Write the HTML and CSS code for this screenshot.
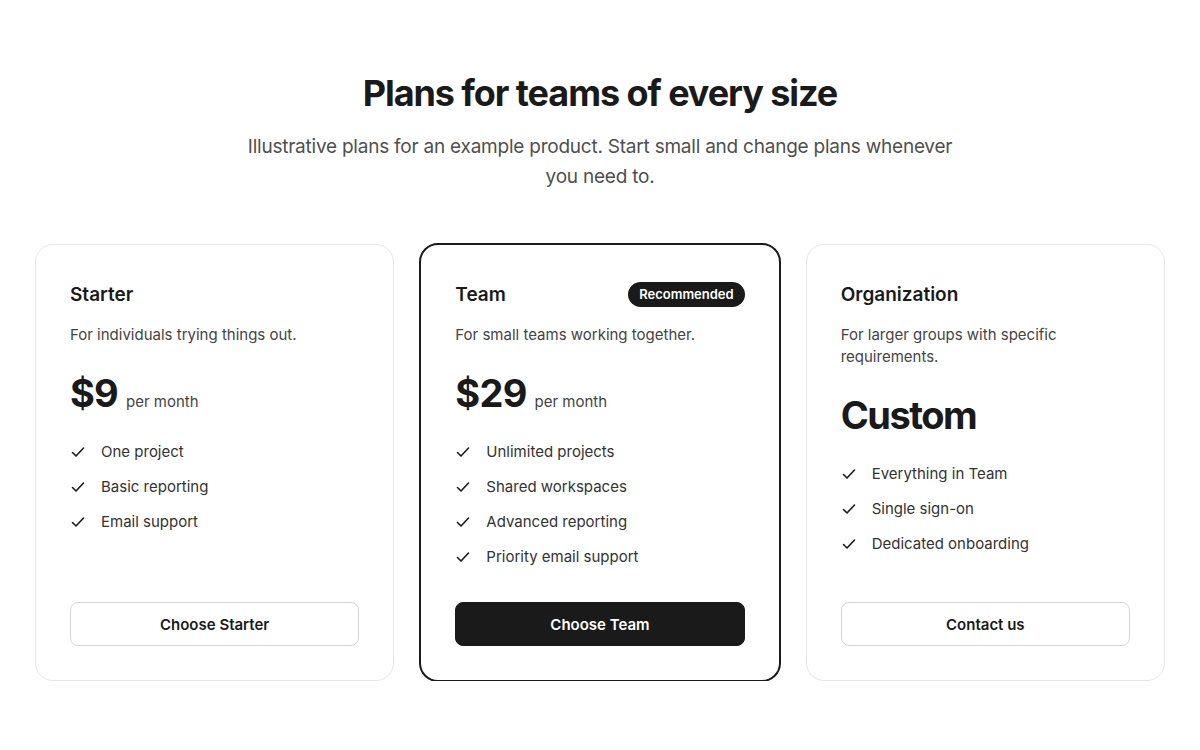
FILE: index.html
```html
<!DOCTYPE html>
<html lang="en">

<head>
    <meta charset="UTF-8">
    <meta name="viewport" content="width=device-width, initial-scale=1.0">
    <title>Pricing</title>
    <link rel="stylesheet" href="styles.css">
</head>

<body>
    <header class="intro">
        <h1>Plans for teams of every size</h1>
        <p>Illustrative plans for an example product. Start small and change plans whenever you need to.</p>
    </header>

    <div class="plans">
        <!-- Starter -->
        <div class="plan">
            <div class="plan-head">
                <h2>Starter</h2>
            </div>
            <p class="plan-desc">For individuals trying things out.</p>
            <div class="price"><span class="amount">$9</span><span class="period">per month</span></div>
            <ul class="features">
                <li><svg class="check" viewBox="0 0 16 16"><path d="M2.5 8.5l3.5 3.5 7.5-8"/></svg>One project</li>
                <li><svg class="check" viewBox="0 0 16 16"><path d="M2.5 8.5l3.5 3.5 7.5-8"/></svg>Basic reporting</li>
                <li><svg class="check" viewBox="0 0 16 16"><path d="M2.5 8.5l3.5 3.5 7.5-8"/></svg>Email support</li>
            </ul>
            <button class="btn">Choose Starter</button>
        </div>

        <!-- Team, the highlighted one -->
        <div class="plan featured">
            <div class="plan-head">
                <h2>Team</h2>
                <span class="badge">Recommended</span>
            </div>
            <p class="plan-desc">For small teams working together.</p>
            <div class="price"><span class="amount">$29</span><span class="period">per month</span></div>
            <ul class="features">
                <li><svg class="check" viewBox="0 0 16 16"><path d="M2.5 8.5l3.5 3.5 7.5-8"/></svg>Unlimited projects</li>
                <li><svg class="check" viewBox="0 0 16 16"><path d="M2.5 8.5l3.5 3.5 7.5-8"/></svg>Shared workspaces</li>
                <li><svg class="check" viewBox="0 0 16 16"><path d="M2.5 8.5l3.5 3.5 7.5-8"/></svg>Advanced reporting</li>
                <li><svg class="check" viewBox="0 0 16 16"><path d="M2.5 8.5l3.5 3.5 7.5-8"/></svg>Priority email support</li>
            </ul>
            <button class="btn btn-dark">Choose Team</button>
        </div>

        <!-- Organization -->
        <div class="plan">
            <div class="plan-head">
                <h2>Organization</h2>
            </div>
            <p class="plan-desc">For larger groups with specific requirements.</p>
            <div class="price"><span class="amount custom">Custom</span></div>
            <ul class="features">
                <li><svg class="check" viewBox="0 0 16 16"><path d="M2.5 8.5l3.5 3.5 7.5-8"/></svg>Everything in Team</li>
                <li><svg class="check" viewBox="0 0 16 16"><path d="M2.5 8.5l3.5 3.5 7.5-8"/></svg>Single sign-on</li>
                <li><svg class="check" viewBox="0 0 16 16"><path d="M2.5 8.5l3.5 3.5 7.5-8"/></svg>Dedicated onboarding</li>
            </ul>
            <button class="btn">Contact us</button>
        </div>
    </div>
</body>

</html>
```

FILE: styles.css
```css
body {
    margin: 0;
    padding: 0 35px;
    background: #fff;
    color: #1a1a1a;
    font-family: Inter, "Noto Sans", sans-serif;
}

.intro {
    text-align: center;
    padding-top: 70px;
}

.intro h1 {
    margin: 0;
    font-size: 36px;
    line-height: 46px;
    font-weight: 700;
    letter-spacing: -0.03em;
}

.intro p {
    max-width: 720px;
    margin: 16px auto 0;
    font-size: 19px;
    line-height: 30px;
    letter-spacing: -0.012em;
    color: #4f4f4f;
}

.plans {
    display: grid;
    grid-template-columns: repeat(3, 1fr);
    gap: 26px;
    margin-top: 52px;
}

/* each plan card */
.plan {
    display: flex;
    flex-direction: column;
    min-height: 437px;
    box-sizing: border-box;
    padding: 35px 34px 34px;
    border: 1px solid #e6e6e6;
    border-radius: 18px;
}

/* thicker border grows outwards by 1px so the content stays lined up */
.plan.featured {
    margin: -1px;
    border: 2px solid #1a1a1a;
    border-radius: 19px;
}

.plan-head {
    display: flex;
    align-items: center;
    justify-content: space-between;
    height: 28px;
}

.plan-head h2 {
    margin: 0;
    font-size: 19px;
    font-weight: 600;
}

.badge {
    background: #1a1a1a;
    color: #fff;
    font-size: 13px;
    font-weight: 600;
    line-height: 25px;
    padding: 0 11px;
    border-radius: 13px;
}

.plan-desc {
    margin: 16px 0 0;
    font-size: 15px;
    line-height: 22px;
    color: #444;
}

.price {
    display: flex;
    align-items: baseline;
    gap: 8px;
    margin-top: 23px;
}

.amount {
    font-size: 38px;
    line-height: 48px;
    font-weight: 700;
    letter-spacing: -0.02em;
}

.amount.custom {
    letter-spacing: -0.04em;
}

.period {
    font-size: 15px;
    color: #444;
}

.features {
    list-style: none;
    margin: 24px 0 0;
    padding: 0;
}

.features li {
    display: flex;
    align-items: center;
    gap: 15px;
    font-size: 15px;
    line-height: 22px;
    color: #333;
    margin-bottom: 13px;
}

.check {
    width: 16px;
    height: 16px;
    fill: none;
    stroke: #1a1a1a;
    stroke-width: 1.6;
    stroke-linecap: round;
    stroke-linejoin: round;
}

.btn {
    margin-top: auto;
    height: 44px;
    border: 1px solid #d4d4d4;
    border-radius: 8px;
    background: #fff;
    color: #1a1a1a;
    font-family: inherit;
    font-size: 15px;
    font-weight: 600;
}

.btn-dark {
    background: #1a1a1a;
    border-color: #1a1a1a;
    color: #fff;
}
```
